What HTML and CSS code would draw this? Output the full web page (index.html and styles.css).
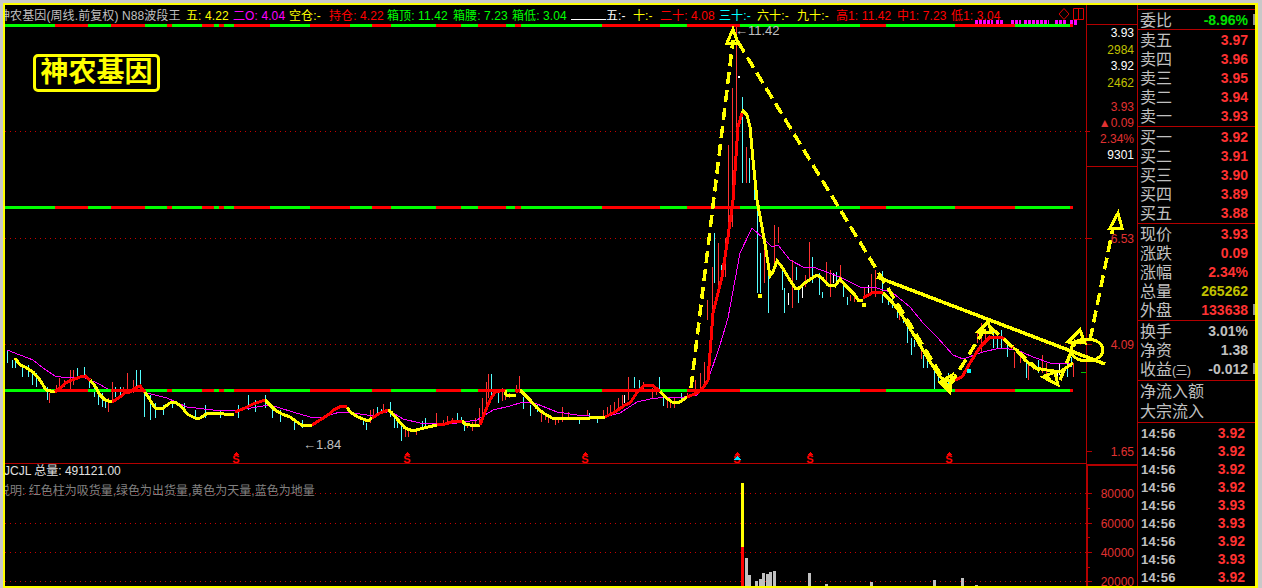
FILE: index.html
```html
<!DOCTYPE html>
<html lang="zh-CN">

<head>
   <meta charset="UTF-8">
   <title>神农基因</title>
   <link rel="stylesheet" href="styles.css">
</head>

<body>
   <div class="frame">
      <div class="main">
         <!-- titre des indicateurs -->
         <div class="title">
            <span class="t-name">神农基因(周线.前复权) N88波段王</span>
            <span class="yellow w-a">五: 4.22</span>
            <span class="magenta w-b">二O: 4.04</span>
            <span class="yellow w-c">空仓:-</span>
            <span class="red w-d">持仓: 4.22</span>
            <span class="green w-e">箱顶: 11.42</span>
            <span class="green w-f">箱腰: 7.23</span>
            <span class="green w-g">箱低: 3.04</span>
            <span class="rule"></span>
            <span class="white w-h">五:-</span>
            <span class="yellow w-i">十:-</span>
            <span class="red w-j">二十: 4.08</span>
            <span class="cyan w-k">三十:-</span>
            <span class="yellow w-l">六十:-</span>
            <span class="yellow w-m">九十:-</span>
            <span class="red w-n">高1: 11.42</span>
            <span class="red w-o">中1: 7.23</span>
            <span class="red w-p">低1: 3.04</span>
            <svg class="title-icons" width="28" height="14" viewBox="0 0 28 14">
               <path class="ico" d="M6 1.5 11 7 6 12.5 1 7Z" />
               <path class="ico" d="M15.5 1.5H25.5V12.5H15.5ZM20.5 1.5V12.5" />
            </svg>
         </div>
         <div class="corner"></div>

         <!-- graphique des cours -->
         <div class="price">
            <svg class="chart" width="1081" height="440" viewBox="5 24 1081 440">
               <defs>
                  <path id="seg" d="M5 0H55M88 0H111M145 0H167M172 0H202M214 0H219M224 0H234M270 0H310M350 0H372M391 0H436M461 0H478M506 0H515M521 0H602M660 0H687M740 0H860M886 0H955M1015 0H1070" class="band-g" />
                  <path id="segr" d="M55 0H88M111 0H145M167 0H172M202 0H214M219 0H224M234 0H270M310 0H350M372 0H391M436 0H461M478 0H506M515 0H521M602 0H660M687 0H740M860 0H886M955 0H1015M1070 0H1073" class="band-r" />
               </defs>

               <path class="grid" d="M5 131H1086M5 238H1086M5 344H1086" />
               <path class="tick" d="M1086 238H1092M1086 344H1092M1086 451H1092M1086 131H1090" />
               <path class="line-dark" d="M5 463H1086" />

               <path class="mag-dots" d="M975 22H993M996 22H1003M1011 22H1021M1024 22H1049M1055 22H1066M1070 22H1077" />

               <!-- bougies -->
               <path class="bar-c" d="M7 350V363M12 360V368M15 360V368M22 365V377M28 365V377M32 370V385M36 373V387M43 385V390M47 387V400M77 368V380M84 367V378M89 380V388M94 387V397M98 392V405M102 393V407M105 400V408M115 387V397M120 387V395M136 370V387M140 370V392M144 392V417M150 395V420M155 403V418M163 405V415M172 400V408M184 403V413M195 410V420M205 405V418M220 410V418M238 405V418M248 395V410M255 400V412M265 395V408M272 405V418M280 410V422M294 420V430M302 420V428M366 423V430M363 420V425M377 407V413M381 409V414M390 402V417M394 418V428M397 420V428M401 423V441M422 421V428M425 418V427M457 413V423M461 417V422M464 423V431M491 374V398M498 392V403M523 397V409M530 405V416M537 405V412M579 417V424M589 413V419M597 417V423M634 377V388M639 380V388M659 377V392M663 398V406M681 393V402M714 233V283M721 265V283M742 97V183M749 158V183M754 180V200M757 203V293M760 253V293M768 267V313M782 267V290M784 288V313M796 267V280M798 288V303M812 257V283M819 273V295M822 292V298M836 272V283M843 283V297M847 297V305M882 271V303M888 297V305M892 298V308M897 307V318M903 315V323M907 323V343M911 338V355M914 340V347M923 355V368M927 355V368M934 367V390M938 373V382M948 373V388M993 328V348M997 337V348M1001 330V348M1007 340V357M1026 360V378M1038 360V373M1067 363V377M1071 357V367" />
               <path class="bar-r" d="M49 393V403M56 385V393M59 378V392M64 380V387M70 370V390M73 370V385M108 398V412M112 382V400M123 387V393M127 373V390M133 380V393M370 410V423M373 409V418M383 404V413M405 427V437M408 428V437M416 430V435M436 413V425M443 420V425M447 416V424M452 418V423M467 423V428M472 422V431M475 418V425M479 408V423M482 398V420M486 382V408M488 374V398M502 388V401M505 395V400M509 393V398M516 385V393M519 376V393M541 413V422M545 415V420M548 418V423M555 417V425M558 418V423M562 407V422M568 412V420M587 410V416M603 410V417M607 407V417M610 405V413M614 402V412M618 398V408M622 395V405M628 377V400M643 382V390M652 388V398M656 388V395M667 398V408M670 402V408M674 398V408M687 393V398M695 380V392M700 373V390M704 362V387M707 300V320M712 267V313M718 243V293M725 238V277M728 145V240M732 88V227M736 27V153M746 147V183M764 250V283M774 225V270M778 227V243M792 260V308M805 275V287M809 242V280M826 262V283M830 270V297M840 265V283M850 295V301M854 295V302M864 288V298M871 274V295M875 270V297M899 313V320M921 350V359M977 332V343M981 323V353M985 330V340M1014 352V368M1020 352V363M1028 363V380M1033 363V370M1042 355V373M1046 363V375M1073 363V377" />
               <path class="bar-w" d="M624 395V403M788 293V305M802 287V298M833 273V283M868 285V295M1059 363V375" />

               <path class="mag" d="M7 350 20 355 33 360 43 368 55 376 67 378 83 377 97 383 108 389 143 392 167 398 187 407 213 410 233 411 257 407 270 405 293 412 310 417 323 417 340 412 360 414 373 416 390 411 403 419 420 423 457 423 477 420 493 410 510 406 523 402 537 404 557 412 577 415 603 417 620 413 637 402 650 399 667 397 677 398 697 395 707 383 720 345 728 318 740 253 752 228 763 238 772 247 778 245 790 260 805 268 813 267 840 277 860 287 877 288 893 293 910 307 923 323 937 337 953 355 963 359 983 352 1000 348 1017 350 1033 357 1050 363 1073 363" />

               <!-- les trois bandes -->
               <use href="#seg" y="25" /><use href="#segr" y="25" />
               <use href="#seg" y="207.5" /><use href="#segr" y="207.5" />
               <use href="#seg" y="390.5" /><use href="#segr" y="390.5" />

               <!-- moyenne rouge / jaune -->
               <path class="ma-y" d="M15 358 20 365 25 367 33 372 40 380 46 390 55 392M90 380 95 386 100 395 105 400 112 402M145 392 150 400 155 408 162 409 170 403 175 402 182 407 187 414 195 418 200 418 208 413 213 413M213 413 234 415M265 400 275 410 282 414 290 417 297 422 303 426 312 425M347 407 350 412 358 417 368 421 372 418M388 410 391 412 398 420 405 428 413 431 420 429 428 427 437 425M462 421 465 424 470 425 480 425M505 390 506 395 516 396M520 390 530 400 537 408 545 414 552 418 565 419 590 418 605 417M660 391 665 397 672 402 680 402 687 397M742 113 743 111 747 115 750 127 753 160 757 200 762 227 766 250 770 276 773 272 777 261 782 267 788 277 795 288 799 288 806 282 817 275 822 278 828 285 835 286 840 279 845 285 855 295 858 300 863 300M883 293 893 303 903 317 917 340 927 357 940 377 945 380 955 380M1013 348 1017 350 1025 360 1035 368 1047 370 1060 372 1073 363" />
               <path class="ma-r" d="M55 392 60 388 67 382 72 380 80 377 85 376 90 380M112 402 120 397 125 393 130 392 135 388 140 386 145 392M235 412 245 408 253 404 265 400M312 425 320 420 328 415 335 409 342 406 347 407M372 418 380 413 388 410M437 425 445 424 455 421 462 421M480 425 485 412 490 400 495 392 505 390M516 392 520 390M605 417 615 412 625 405 630 403 638 391 645 385 652 385 660 391M687 397 697 393 703 388 708 380 713 313 722 277 728 237 733 200 738 127 742 113M863 298 872 293 880 292 883 293M955 380 962 377 970 363 980 347 990 337 1003 338 1013 348" />

               <!-- points -->
               <circle class="dot-y" cx="760" cy="296" r="2.5" />
               <circle class="dot-y" cx="864" cy="305" r="2.5" />
               <circle class="dot-c" cx="969" cy="371" r="2.5" />
               <circle class="dot-w" cx="1056" cy="375" r="2.5" />
               <circle class="dot-w" cx="739" cy="77" r="1" />
               <path class="tick-g" d="M1081 372H1086" />

               <!-- traits ajoutés à la main -->
               <path class="dash" d="M691 388 733 40M738 42 950 390M950 385 986 327M990 327 1050 380M1060 380 1076 340M1090 340 1113 228" />
               <path class="hand" d="M877 277 1105 364" />
               <path class="hand-thin" d="M733 29 727 43 738 43ZM940 382 952 375 950 392ZM978 332 988 322 992 333ZM1043 377 1055 372 1058 385ZM1068 342 1080 330 1085 343ZM1110 228 1118 213 1122 228Z" />
               <ellipse class="hand-thin" cx="1087" cy="350" rx="16" ry="11" />

               <!-- signaux S -->
               <g class="sig">
                  <path d="M236 452 239 455H233ZM407 452 410 455H404ZM585 452 588 455H582ZM737 452 740 455H734ZM810 452 813 455H807ZM949 452 952 455H946Z" />
                  <text x="236" y="463">S</text><text x="407" y="463">S</text><text x="585" y="463">S</text>
                  <text x="737" y="463">S</text><text x="810" y="463">S</text><text x="949" y="463">S</text>
               </g>
               <path class="sig-c" d="M737 456 741 460H733Z" />

               <text class="mark" x="303" y="449">←1.84</text>
               <text class="mark" x="735" y="35">←11.42</text>

               <text class="scale" x="1134" y="243">6.53</text>
               <text class="scale" x="1134" y="349">4.09</text>
               <text class="scale" x="1134" y="456">1.65</text>
            </svg>
            <div class="logo">神农基因</div>
         </div>

         <div class="axis">
            <div class="quote">
               <div class="q-top white">3.93</div>
               <div class="q-top olive">2984</div>
               <div class="q-top white">3.92</div>
               <div class="q-top olive">2462</div>
               <div class="q-low dim">3.93</div>
               <div class="q-low dim">▲0.09</div>
               <div class="q-low dim">2.34%</div>
               <div class="q-low white">9301</div>
            </div>
         </div>

         <!-- volume -->
         <div class="volume">
            <svg class="chart-vol" width="1081" height="122" viewBox="5 464 1081 122">
               <path class="grid" d="M5 493H1086M5 523H1086M5 552H1086M5 581H1086" />
               <path class="tick" d="M1088 493H1092M1088 523H1092M1088 552H1092M1088 581H1092M1088 508H1090M1088 537H1090M1088 567H1090" />
               <rect class="v-y" x="741" y="483" width="3" height="64" />
               <rect class="v-r" x="741" y="547" width="3" height="39" />
               <path class="v-g" d="M745 558H748V586H745ZM748 575H751V586H748ZM755 581H758V586H755ZM759 579H762V586H759ZM762 573H765V586H762ZM766 574H769V586H766ZM769 572H772V586H769ZM773 571H776V586H773ZM808 573H811V586H808ZM825 584H828V586H825ZM870 582H873V586H870ZM933 580H936V586H933ZM961 578H964V586H961ZM975 585H978V586H975Z" />
               <text class="scale" x="1134" y="498">80000</text>
               <text class="scale" x="1134" y="528">60000</text>
               <text class="scale" x="1134" y="557">40000</text>
               <text class="scale" x="1134" y="586">20000</text>
            </svg>
            <div class="v-title"><span class="v-name">JCJL</span> 总量: 491121.00</div>
            <div class="v-note">说明: 红色柱为吸货量,绿色为出货量,黄色为天量,蓝色为地量</div>
         </div>
         <div class="axis-vol"></div>
      </div>

      <!-- panneau de droite -->
      <div class="panel">
         <div class="sec sec-wb"><div class="row cut"><span>委比</span><b class="green">-8.96%</b></div></div>
         <div class="sec">
            <div class="row"><span>卖五</span><b>3.97</b></div>
            <div class="row"><span>卖四</span><b>3.96</b></div>
            <div class="row"><span>卖三</span><b>3.95</b></div>
            <div class="row"><span>卖二</span><b>3.94</b></div>
            <div class="row"><span>卖一</span><b>3.93</b></div>
         </div>
         <div class="sec">
            <div class="row"><span>买一</span><b>3.92</b></div>
            <div class="row"><span>买二</span><b>3.91</b></div>
            <div class="row"><span>买三</span><b>3.90</b></div>
            <div class="row"><span>买四</span><b>3.89</b></div>
            <div class="row"><span>买五</span><b>3.88</b></div>
         </div>
         <div class="sec">
            <div class="row"><span>现价</span><b>3.93</b></div>
            <div class="row"><span>涨跌</span><b>0.09</b></div>
            <div class="row"><span>涨幅</span><b>2.34%</b></div>
            <div class="row"><span>总量</span><b class="olive">265262</b></div>
            <div class="row cut"><span>外盘</span><b>133638</b></div>
         </div>
         <div class="sec sec-3">
            <div class="row"><span>换手</span><b class="gray">3.01%</b></div>
            <div class="row"><span>净资</span><b class="gray">1.38</b></div>
            <div class="row cut"><span>收益<i class="small">(三)</i></span><b class="gray">-0.012</b></div>
         </div>
         <div class="sec sec-2">
            <div class="row"><span>净流入额</span></div>
            <div class="row"><span>大宗流入</span></div>
         </div>
         <div class="ticks">
            <div class="tk"><span>14:56</span><b>3.92</b></div>
            <div class="tk"><span>14:56</span><b>3.92</b></div>
            <div class="tk"><span>14:56</span><b>3.92</b></div>
            <div class="tk"><span>14:56</span><b>3.92</b></div>
            <div class="tk"><span>14:56</span><b>3.93</b></div>
            <div class="tk"><span>14:56</span><b>3.93</b></div>
            <div class="tk"><span>14:56</span><b>3.92</b></div>
            <div class="tk"><span>14:56</span><b>3.93</b></div>
            <div class="tk"><span>14:56</span><b>3.92</b></div>
         </div>
      </div>
   </div>
</body>

</html>
```
FILE: styles.css
```css
* {
   padding: 0;
   margin: 0;
   box-sizing: border-box;
   font-family: "Liberation Sans", "Noto Sans CJK SC", sans-serif;
}

html, body {
   height: 100%;
   overflow: hidden;
   background-color: #c8c8c8;
}

.yellow { color: #ffff00; }
.magenta { color: #ff00ff; }
.red { color: #ff0000; }
.green { color: #00ff00; }
.cyan { color: #00ffff; }
.white { color: #ffffff; }
.olive { color: #c0c000; }
.dim { color: #e03232; }

/** Cadre */
.frame {
   display: flex;
   margin: 3px 4px 0 3px;
   height: 585px;
   border: solid #ffff00;
   border-width: 2px 3px 2px 2px;
   background-color: #000;
}
.main {
   display: grid;
   grid-template-columns: 1081px 51px;
   grid-template-rows: 19px 440px 122px;
   width: 1132px;
}

/** Titre */
.title {
   display: flex;
   align-items: center;
   position: relative;
   overflow: hidden;
   font-size: 12px;
   letter-spacing: .1px;
   white-space: nowrap;
}
.title span { flex: none; }
.t-name { color: #c0c0c0; width: 188px; margin-left: -7px; }
.w-a { width: 47px; }
.w-b { width: 56px; }
.w-c { width: 40px; }
.w-d { width: 58px; }
.w-e { width: 66px; }
.w-f { width: 59px; }
.w-g { width: 59px; }
.rule { width: 35px; height: 1px; background-color: #fff; margin-top: 9px; }
.w-h { width: 27px; }
.w-i { width: 27px; }
.w-j { width: 59px; }
.w-k { width: 38px; }
.w-l { width: 40px; }
.w-m { width: 39px; }
.w-n { width: 61px; }
.w-o { width: 54px; }
.w-p { width: 60px; }
.title-icons { position: absolute; left: 1053px; top: 2px; }
.ico { fill: none; stroke: #e00000; stroke-width: 1; }

.corner {
   border-left: 1px solid #b40000;
}

/** Graphique */
.price {
   position: relative;
   z-index: 1;
}
.chart {
   display: block;
   overflow: visible;
}
.chart path, .chart ellipse, .chart circle, .chart-vol path, .chart-vol rect {
   shape-rendering: crispEdges;
}
.logo {
   position: absolute;
   left: 28px;
   top: 30px;
   width: 127px;
   height: 38px;
   border: 3px solid #ffff00;
   border-radius: 5px;
   color: #ffff00;
   font-size: 28px;
   font-weight: bold;
   line-height: 31px;
   text-align: center;
   white-space: nowrap;
}
.grid { stroke: #c80000; stroke-width: 1; stroke-dasharray: 1 4; fill: none; }
.tick { stroke: #b40000; stroke-width: 1; fill: none; }
.line-dark { stroke: #b40000; stroke-width: 1; fill: none; }
.mag-dots { stroke: #ff00ff; stroke-width: 5; stroke-dasharray: 3 1; fill: none; }
.bar-c { stroke: #54ffff; stroke-width: 1; fill: none; }
.bar-r { stroke: #ff3232; stroke-width: 1; fill: none; }
.bar-w { stroke: #ffffff; stroke-width: 1; fill: none; }
.mag { stroke: #ff00ff; stroke-width: 1; fill: none; }
.band-g { stroke: #00ff00; stroke-width: 3; fill: none; }
.band-r { stroke: #ff0000; stroke-width: 3; fill: none; }
.ma-y { stroke: #ffff00; stroke-width: 3; fill: none; }
.ma-r { stroke: #ff0000; stroke-width: 3; fill: none; }
.dot-y { fill: #ffff00; }
.dot-c { fill: #00ffff; }
.dot-w { fill: #ffffff; }
.tick-g { stroke: #00c000; stroke-width: 1; }
.dash { stroke: #ffff00; stroke-width: 3.5; stroke-dasharray: 12 6; fill: none; }
.hand { stroke: #ffff00; stroke-width: 3.5; fill: none; }
.hand-thin { stroke: #ffff00; stroke-width: 3; fill: none; }
.sig { fill: #ff0000; }
.sig text { font-size: 11px; font-weight: bold; text-anchor: middle; }
.sig-c { fill: #00e0ff; }
.mark { fill: #c0c0c0; font-size: 13px; }
.scale { fill: #e03232; font-size: 12px; text-anchor: end; }
.v-y { fill: #ffff00; }
.v-r { fill: #ff0000; }
.v-g { fill: #c0c0c0; }

/** Axe */
.axis {
   border-left: 1px solid #b40000;
   border-top: 1px solid #b40000;
}
.quote {
   height: 142px;
   border-bottom: 1px solid #b40000;
   font-size: 12px;
   text-align: right;
   padding-right: 3px;
}
.q-top { height: 16.5px; line-height: 16.5px; }
.q-low { height: 16px; line-height: 16px; }
.q-top + .q-low { margin-top: 8px; }

/** Volume */
.volume {
   position: relative;
   font-size: 12px;
   white-space: nowrap;
   overflow: visible;
}
.chart-vol {
   position: absolute;
   left: 0;
   top: 0;
   overflow: visible;
}
.v-title, .v-note {
   position: relative;
   height: 20px;
   line-height: 20px;
   overflow: hidden;
}
.v-title { color: #e0e0e0; margin-top: -3px; padding-top: 0; }
.v-name { margin-left: -1px; }
.v-note { color: #808080; text-indent: -7px; }
.axis-vol {
   border-left: 2px solid #b40000;
   border-top: 2px solid #b40000;
}

/** Panneau */
.panel {
   width: 118px;
   border-left: 1px solid #b40000;
   padding-top: 4px;
}
.sec {
   padding-bottom: 1px;
   border-bottom: 1px solid #b40000;
}
.sec-wb {
   border-top: 1px solid #b40000;
   padding-bottom: 0;
}
.sec-3 { padding-bottom: 2px; }
.sec-2 { padding-bottom: 1px; }
.sec-2 .row { height: 20px; }
.row {
   display: flex;
   position: relative;
   justify-content: space-between;
   align-items: center;
   height: 19px;
   padding: 0 7px 0 2px;
   color: #c0c0c0;
   font-size: 16px;
   white-space: nowrap;
}
.row span { margin-top: -2px; }
.row .small {
   font-style: normal;
   font-size: 12px;
   letter-spacing: -.5px;
}
.row b {
   color: #ff3232;
   font-size: 14px;
}
.row b.green { color: #00e000; }
.row b.olive { color: #c0c000; }
.row b.gray { color: #c0c0c0; }
/* bout de texte coupe au bord du panneau */
.cut::after {
   content: "";
   position: absolute;
   right: 0;
   top: 4px;
   width: 2px;
   height: 11px;
   background-color: #909090;
}
.ticks { padding-top: 1px; }
.tk {
   display: flex;
   justify-content: space-between;
   align-items: center;
   height: 18px;
   padding: 0 10px 0 3px;
   font-size: 14px;
   font-weight: bold;
   color: #c0c0c0;
}
.tk span { font-size: 13px; letter-spacing: .3px; }
.tk b { color: #ff3232; }
```
